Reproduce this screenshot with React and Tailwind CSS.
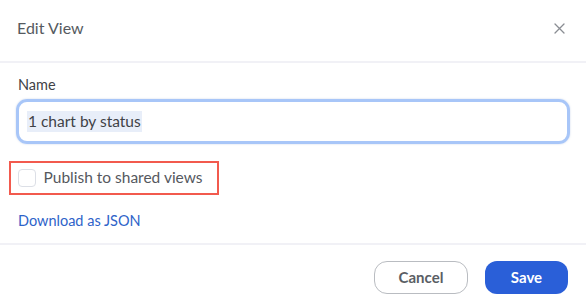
import React from "react";

export default function App() {
  return (
    <div className="w-[586px] h-[306px] bg-white font-['Lato',sans-serif] text-[#3f4247] overflow-hidden">
      <div className="h-[61px] flex items-center justify-between pl-[17px] pr-[21px] pb-[5px]">
        <h2 className="text-[16px] text-[#555a60]">Edit View</h2>
        <svg width="11" height="11" viewBox="0 0 11 11" className="text-[#8a8d93]">
          <path d="M1 1L10 10M10 1L1 10" stroke="currentColor" strokeWidth="1.3" strokeLinecap="round" />
        </svg>
      </div>
      <div className="h-[2px] bg-[#f1f1f6]" />
      <div className="px-[16px] pt-[13px]">
        <div className="text-[14.5px] leading-[18px] text-[#3f4247] pl-[2px]">Name</div>
        <div className="mt-[5px] h-[45px] w-[554px] rounded-[11px] border-[3px] border-[#a8c6f8] shadow-[0_0_2px_rgba(120,150,200,0.4)] flex items-center px-[8px]">
          <span className="text-[15.5px] leading-[21px] text-[#3f4247] bg-[#e8eef9] px-[1px]">1 chart by status</span>
        </div>
        <div className="mt-[17px] -ml-[7px] w-[210px] h-[34px] border-[2.5px] border-[#f25a4e] flex items-center pl-[6.5px]">
          <div className="w-[18px] h-[18px] rounded-[4px] border-[1.5px] border-[#dcdfe6] bg-white" />
          <span className="ml-[8px] text-[15.5px] text-[#55585e]">Publish to shared views</span>
        </div>
        <div className="mt-[17px] pl-[2px] text-[14.5px] leading-[18px] text-[#2e63c9]">Download as JSON</div>
      </div>
      <div className="mt-[13px] h-[2px] bg-[#f1f1f6]" />
      <div className="flex justify-end gap-[17px] pr-[18px] pt-[16px]">
        <button className="w-[94px] h-[33px] rounded-[13px] border-[1.5px] border-[#b9bcc1] text-[15px] font-bold text-[#5a5e64] bg-white">Cancel</button>
        <button className="w-[83px] h-[33px] rounded-[12px] bg-[#2a5fd8] text-[15px] font-bold text-white">Save</button>
      </div>
    </div>
  );
}
